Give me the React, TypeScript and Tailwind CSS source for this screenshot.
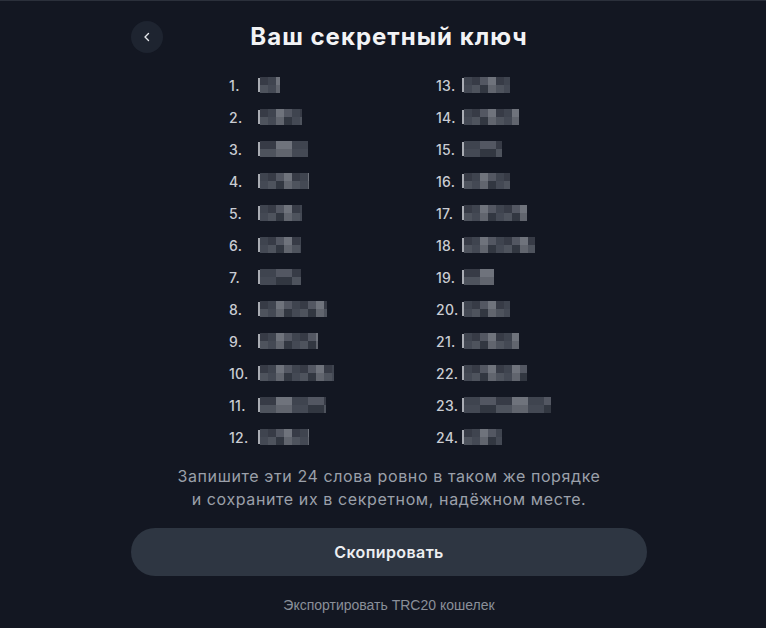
import React from "react";

const left = [22, 44, 50, 51, 44, 43, 43, 69, 60, 76, 68, 51];
const right = [48, 57, 40, 48, 65, 73, 32, 48, 57, 65, 89, 40];

const shades = ["#3b404b", "#4a4f5a", "#5a5f69", "#6a6e77", "#444954", "#555a64", "#7a7e86", "#363b45"];

function Mosaic({ w, seed }: { w: number; seed: number }) {
  const cols = Math.ceil(w / 8);
  const cells: React.ReactNode[] = [];
  for (let r = 0; r < 2; r++) {
    for (let c = 0; c < cols; c++) {
      const idx = (seed * 7 + c * 3 + r * 5 + ((c * c + seed) % 4)) % shades.length;
      cells.push(
        <div
          key={r + "-" + c}
          style={{ width: c === cols - 1 ? w - 8 * (cols - 1) : 8, height: 8, background: shades[idx] }}
        />
      );
    }
  }
  return (
    <div className="flex flex-wrap blur-[0.6px] opacity-90" style={{ width: w, height: 16 }}>
      {cells}
    </div>
  );
}

function Row({ n, w, numW }: { n: number; w: number; numW: string }) {
  return (
    <div className="flex items-center h-[32px]">
      <span className={`${numW} text-[14px] text-[#c9ccd3] font-medium tracking-[0.3px]`}>{n}.</span>
      <div className="flex items-center">
        <div className="w-[2px] h-[14px] bg-[#d0d2d8] opacity-80" />
        <Mosaic w={w - 2} seed={n} />
      </div>
    </div>
  );
}

export default function App() {
  return (
    <div
      className="w-[766px] h-[628px] bg-[#131722] border-t border-[#2b303b] overflow-hidden"
      style={{ fontFamily: "Inter, 'Noto Sans', sans-serif" }}
    >
      <div className="ml-[131px] w-[516px] flex flex-col">
        <div className="grid grid-cols-[32px_1fr_32px] items-center h-[48px] mt-[12px]">
          <button className="w-[32px] h-[32px] rounded-full bg-[#1e2430] flex items-center justify-center">
            <svg width="12" height="12" viewBox="0 0 12 12" fill="none">
              <path d="M7.5 2.5L4 6l3.5 3.5" stroke="#e6e8ec" strokeWidth="1.4" strokeLinecap="round" strokeLinejoin="round" />
            </svg>
          </button>
          <h1 className="text-center text-[24px] font-bold text-[#f2f3f5] tracking-[1px]">Ваш секретный ключ</h1>
          <div />
        </div>

        <div className="grid grid-cols-[207px_auto] pl-[98px] mt-[8px]">
          <div className="flex flex-col">
            {left.map((w, i) => (
              <Row key={i} n={i + 1} w={w} numW="w-[29px]" />
            ))}
          </div>
          <div className="flex flex-col">
            {right.map((w, i) => (
              <Row key={i} n={i + 13} w={w} numW="w-[26px]" />
            ))}
          </div>
        </div>

        <p className="mt-[12px] text-center text-[16px] leading-[23px] tracking-[0.6px] text-[#9ba0aa]">
          Запишите эти 24 слова ровно в таком же порядке
          <br />и сохраните их в секретном, надёжном месте.
        </p>

        <button className="mt-[17px] h-[48px] w-full rounded-full bg-[#2e3642] text-[16px] font-semibold tracking-[0.4px] text-[#eceef1]">
          Скопировать
        </button>

        <div
          className="mt-[20px] text-center text-[14px] leading-[18px] text-[#8a8f99]"
          style={{ fontFamily: "'Liberation Sans', Arial, sans-serif" }}
        >
          Экспортировать TRC20 кошелек
        </div>
      </div>
    </div>
  );
}
